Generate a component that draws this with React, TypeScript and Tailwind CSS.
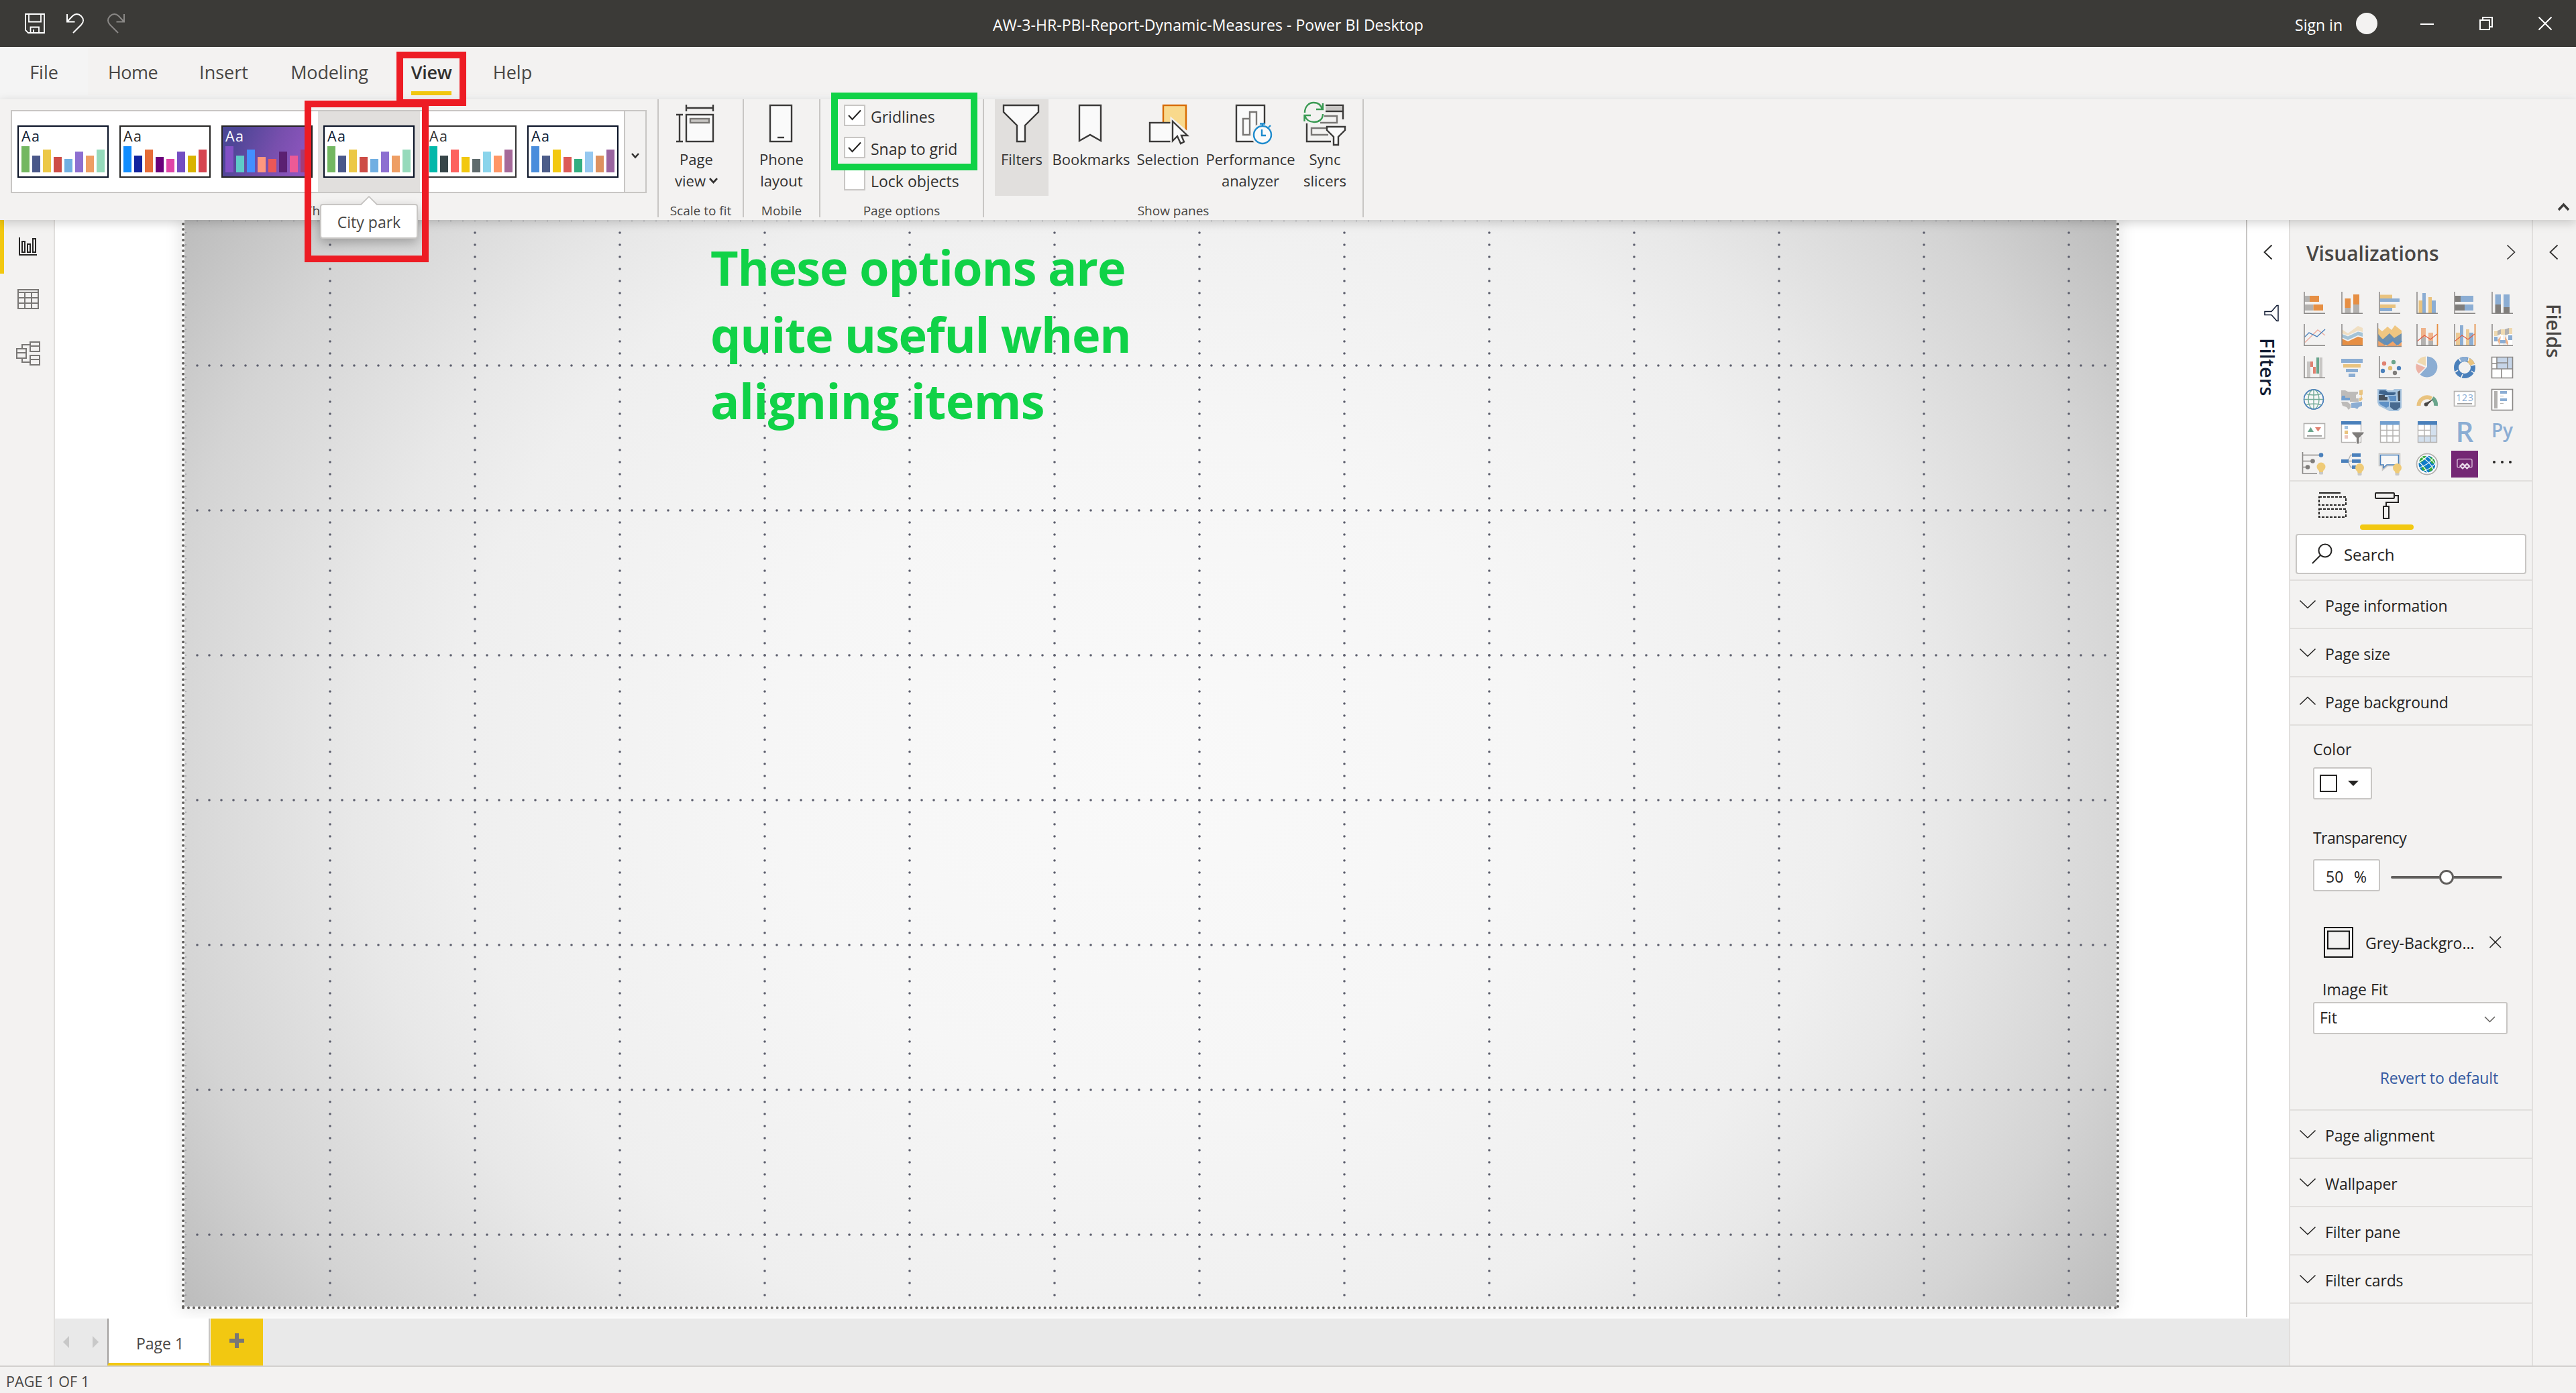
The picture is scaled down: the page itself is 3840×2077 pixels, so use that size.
import React from "react";

/* ---------- Theme gallery ---------- */

const BAR_TOPS = [31, 45, 36, 47, 50, 39, 45, 36];

type Theme = { ink: string; frame: string; bars: string[]; purple?: boolean };

const CITY_BARS = ["#73b761", "#4a588a", "#ecc846", "#cd4c46", "#71afe2", "#8d6fd1", "#ee9e64", "#95dabb"];

const THEMES: Theme[] = [
  { ink: "#0b1a33", frame: "#071024", bars: CITY_BARS },
  { ink: "#252423", frame: "#252423", bars: ["#118dff", "#12239e", "#e66c37", "#6b007b", "#e044a7", "#744ec2", "#d9b300", "#d64550"] },
  { ink: "#ffffff", frame: "#252423", purple: true, bars: ["#8250c4", "#5ecbc8", "#438fff", "#ff977e", "#eb5757", "#5b2071", "#ec5a96", "#a43b76"] },
  { ink: "#0b1a33", frame: "#071024", bars: CITY_BARS },
  { ink: "#333333", frame: "#333333", bars: ["#01b8aa", "#374649", "#fd625e", "#f2c80f", "#5f6b6d", "#8ad4eb", "#fe9666", "#a66999"] },
  { ink: "#0b1a33", frame: "#071024", bars: ["#4a8ddc", "#4c5d8a", "#f3c911", "#dc5b57", "#33ae81", "#95c8f0", "#dd915f", "#9a64a0"] },
];

function ThemeThumb({ theme, selected }: { theme: Theme; selected?: boolean }) {
  return (
    <div className={selected ? "flex h-full w-[152px] items-center justify-center bg-[#e1dfdd]" : "flex h-full w-[152px] items-center justify-center"}>
      <svg width="136" height="78" viewBox="0 0 136 78">
        <defs>
          <linearGradient id="purpleTheme" x1="0" y1="0" x2="1" y2="0.25">
            <stop offset="0" stopColor="#4a4896" />
            <stop offset="0.2" stopColor="#4f4697" />
            <stop offset="0.65" stopColor="#774fad" />
            <stop offset="1" stopColor="#8c55bd" />
          </linearGradient>
        </defs>
        <rect x="1" y="1" width="134" height="76" fill={theme.purple ? "url(#purpleTheme)" : "#ffffff"} stroke={theme.frame} strokeWidth="2" />
        <text x="6" y="24" fontFamily="Open Sans" fontSize="21.500" letterSpacing="1.300" fill={theme.ink}>Aa</text>
        {theme.bars.map((c, i) => (
          <rect key={i} x={6 + i * 16} y={BAR_TOPS[i]} width="12" height={70 - BAR_TOPS[i]} fill={c} />
        ))}
      </svg>
    </div>
  );
}

/* ---------- Ribbon ---------- */

function GroupLabel({ children }: { children: React.ReactNode }) {
  return <div className="flex h-[36px] items-center justify-center pt-[7px] text-[19px] leading-[24px] whitespace-nowrap text-[#484644]">{children}</div>;
}

function RibbonButton({ icon, lines, width, active }: { icon: React.ReactNode; lines: React.ReactNode[]; width: string; active?: boolean }) {
  return (
    <div className={`flex h-[144px] flex-col items-center ${active ? "bg-[#e1dfdd]" : ""} ${width}`}>
      <div className="flex h-[73px] shrink-0 justify-center">{icon}</div>
      {lines.map((l, i) => (
        <div key={i} className="flex h-[32px] items-center text-[22px] leading-[32px] whitespace-nowrap text-[#323130]">{l}</div>
      ))}
    </div>
  );
}

function Check({ label, checked }: { label: string; checked?: boolean }) {
  return (
    <div className="flex h-[48px] items-center gap-2 pl-[35px]">
      <div className="flex size-8 items-center justify-center border-2 border-[#c8c6c4] bg-white">
        {checked && (
          <svg width="24" height="24" viewBox="0 0 24 24" fill="none" stroke="#252423" strokeWidth="2">
            <path d="M3 12L8.5 18L21 4.5" />
          </svg>
        )}
      </div>
      <span className="pt-[3px] text-[23px] leading-8 whitespace-nowrap text-[#323130]">{label}</span>
    </div>
  );
}

const Sep = () => <div className="h-[176px] w-[2px] shrink-0 bg-[#c8c6c4]" />;

const PageViewIcon = () => (
  <svg className="mr-[2px]" width="60" height="72" viewBox="0 0 60 72" fill="none" stroke="#3b3a39" strokeWidth="2.4">
    <rect x="16" y="23" width="40" height="40" fill="#fafafa" />
    <path d="M16 8V18M56 8V18M16 13H56M1 23H11M1 63H11M6 23V63" />
    <rect x="22" y="29" width="28" height="6" fill="#c8c6c4" stroke="#797775" />
  </svg>
);
const PhoneIcon = () => (
  <svg className="mr-[2px]" width="36" height="72" viewBox="0 0 36 72" fill="none" stroke="#3b3a39" strokeWidth="2.4">
    <rect x="2" y="9" width="32" height="54" fill="#fafafa" />
    <path d="M13 57H23" />
  </svg>
);
const FunnelIcon = () => (
  <svg className="mr-[2px]" width="56" height="72" viewBox="0 0 56 72" fill="#fafafa" stroke="#3b3a39" strokeWidth="2.4">
    <path d="M2 9H54V19L34 39V63H22V39L2 19Z" />
  </svg>
);
const BookmarkIcon = () => (
  <svg className="mr-[3px]" width="36" height="72" viewBox="0 0 36 72" fill="#fafafa" stroke="#3b3a39" strokeWidth="2.4">
    <path d="M2 9H34V62L18 53L2 62Z" />
  </svg>
);
const SelectionIcon = () => (
  <svg className="ml-[2px]" width="62" height="72" viewBox="0 0 62 72" fill="none" strokeWidth="2.4">
    <rect x="23" y="9" width="34" height="38" fill="#f9d98c" stroke="#d86b00" />
    <rect x="3" y="35" width="34" height="28" fill="#fafafa" stroke="#3b3a39" />
    <path d="M37 33V63L45 56L50 67L56 64L51 54L61 53.5Z" fill="#fafafa" stroke="#f3f2f1" strokeWidth="7" />
    <path d="M37 33V62L44 55L49 66L54 63.5L50 54H59Z" fill="#fafafa" stroke="#3b3a39" />
  </svg>
);
const PerformanceIcon = () => (
  <svg className="ml-[9px]" width="56" height="72" viewBox="0 0 56 72" fill="none" strokeWidth="2.4">
    <rect x="2" y="9" width="42" height="54" fill="#fafafa" stroke="#3b3a39" />
    <path d="M12 29H22V53H12ZM22 53V19H32V53" stroke="#797775" />
    <circle cx="41" cy="53" r="17" fill="#f3f2f1" />
    <circle cx="41" cy="53" r="13" fill="#fafafa" stroke="#1e8bcd" />
    <path d="M41 40V36M37 36.5H45M40 45V54H46M50 42L53 39" stroke="#1e8bcd" />
  </svg>
);
const SyncIcon = () => (
  <svg width="66" height="72" viewBox="0 0 66 72" fill="none" strokeWidth="2.4">
    <path d="M34 9H60V30M6 36V63H42" stroke="#3b3a39" />
    <rect x="34" y="10" width="25" height="7" fill="#c8c6c4" />
    <path d="M34 18H60" stroke="#3b3a39" />
    <path d="M32 25H51V35H26M38 43H13V53H38" stroke="#797775" />
    <path d="M3 20C3 10 10 5 16 5C24 5 28 10 29 16M20 15H30V6M30 22C30 30 24 34 17 34C10 34 5 31 3 24M12 24H2.500V33" stroke="#3a9a53" />
    <path d="M36 41H63V46L53 56V68H46V56L36 46Z" fill="#fafafa" stroke="#3b3a39" />
  </svg>
);

/* ---------- Visualization icons, each on a 40 x 40 grid ---------- */

const AX = "#8a8886";
const B = "#8badd3";
const DB = "#4a80bb";
const Y = "#e9c37f";
const O = "#e68f44";
const G = "#b3b1af";
const DG = "#7f7d7b";
const R = (x: number, y: number, x2: number, y2: number, f: string, o = 1) => (
  <rect x={x} y={y} width={x2 - x} height={y2 - y} fill={f} opacity={o} />
);
const Axis = () => <path d="M5 3V35.300H36" fill="none" stroke={AX} strokeWidth="1.500" />;
const Bulb = ({ x, y }: { x: number; y: number }) => (
  <g>
    <path d={`M${x - 3} ${y + 6}h6v4q0 1.500 -1.500 1.500h-3q-1.500 0 -1.500 -1.500z`} fill="#c8c8c8" />
    <circle cx={x} cy={y} r="6.500" fill="#efcb77" />
    <path d={`M${x - 4} ${y + 4}h8l-1.500 4h-5z`} fill="#efcb77" />
  </g>
);

const VIZ: React.ReactNode[] = [
  <>{R(5.5, 9, 13, 18, G)}{R(13, 9, 27, 18, O)}{R(5.5, 22, 18.500, 31, G)}{R(18.500, 22, 33, 31, O)}<Axis /></>,
  <>{R(9.5, 13, 18, 27, O)}{R(9.5, 27, 18, 35, G)}{R(22, 7, 31, 22, O)}{R(22, 22, 31, 35, G)}<Axis /></>,
  <>{R(5.5, 7.500, 24, 13, Y)}{R(5.5, 13, 35, 18, B)}{R(5.5, 22, 29, 27, Y)}{R(5.5, 27, 24, 32, B)}<Axis /></>,
  <>{R(7.5, 16, 13, 35, Y)}{R(13, 5, 18, 35, B)}{R(22, 11, 27, 35, Y)}{R(27, 16, 33, 35, B)}<Axis /></>,
  <>{R(5.5, 9, 14, 18, DG)}{R(14, 9, 33, 18, B)}{R(5.5, 22, 20, 31, DG)}{R(20, 22, 33, 31, B)}<Axis /></>,
  <>{R(9.5, 7, 18, 22, B)}{R(9.5, 22, 18, 35, DG)}{R(22, 7, 31, 26, B)}{R(22, 26, 31, 35, DG)}<Axis /></>,
  <><path d="M6 30.500L25 12L36 20" fill="none" stroke="#ecada0" strokeWidth="1.400" /><path d="M5.500 22.500L12 16L24 22L36 11" fill="none" stroke={DB} strokeWidth="1.400" /><Axis /></>,
  <><path d="M5 11L14 17L29 6L36 9V15L29 13L14 20L5 17Z" fill="#f0dfc2" /><path d="M5 18L14 21.500L29 14.500L36 16V22L29 20L14 27L5 23Z" fill="#a4c3d6" /><path d="M5 25L14 29L29 22L36 24V35H5Z" fill={O} /><Axis /></>,
  <><path d="M3 9L9 14L17 7L23 12L28 5L38 13V35H3Z" fill="#efc681" /><path d="M3 18L10 26L20 17L27 24L38 17V34H3Z" fill="#7090ab" /><path d="M9 26L16 33L24 26L31 33L38 28" fill="none" stroke="#5f8fbe" strokeWidth="3" /><path d="M3 28L15 36H3ZM15 36L25 29L32 36ZM31 36L38 30V36Z" fill="#f1a468" /><path d="M2.500 2V36.500H38" fill="none" stroke={AX} strokeWidth="1.500" /></>,
  <>{R(11, 9, 18, 23, "#efb48c")}{R(11, 23, 18, 35, G)}{R(22, 16, 29, 28, "#efb48c")}{R(22, 28, 29, 35, G)}<path d="M5 29L16 20L25 26L35 18" fill="none" stroke="#df5c45" strokeWidth="1.200" /><Axis /><path d="M35.500 3V35" stroke={O} strokeWidth="1.800" /></>,
  <>{R(7, 16, 13, 35, "#ecca95")}{R(13, 5, 18, 35, B)}{R(22, 11, 27, 35, "#ecca95")}{R(27, 16, 33, 35, B)}<path d="M5 29L16 20L25 26L35 18" fill="none" stroke="#df5c45" strokeWidth="1.200" /><Axis /><path d="M35.500 3V35" stroke={O} strokeWidth="1.800" /></>,
  <>{R(7, 12, 13, 35, "#ffffff")}{R(16, 12, 21, 35, "#ffffff")}{R(28, 12, 35, 35, "#ffffff")}{R(8, 13, 13, 21, "#efd9b0")}<path d="M13 13L18 11V18L13 20ZM24 11L30 9V18L24 20Z" fill={G} />{R(18, 11, 24, 19, "#efd9b0")}{R(30, 9, 35, 18, "#efd9b0")}<path d="M13 27L18 21L16 35ZM24 21L29 30V35L24 30Z" fill="#efb48c" />{R(8, 22, 13, 29, B)}{R(29, 20, 35, 27, B)}{R(17, 27, 25, 32, B)}<Axis /></>,
  <>{R(9, 11, 14, 35, "#c8c6c4")}{R(14, 11, 18, 19, "#e08170")}{R(18, 19, 22, 29, "#e08170")}{R(23, 5, 27, 29, "#6aa58c")}{R(27.5, 5, 32, 35, "#c8c6c4")}<Axis /></>,
  <>{R(4, 7, 36, 13, B)}{R(7, 15, 33, 20, Y)}{R(11, 22, 29, 27, B)}{R(15, 29, 25, 34, B)}</>,
  <><Axis /><circle cx="12" cy="14" r="3.200" fill="#e08170" /><circle cx="26" cy="12" r="3.200" fill="#6aa58c" /><circle cx="21" cy="21" r="3.200" fill="#e3bd72" /><circle cx="10" cy="25" r="3.200" fill={DB} /><circle cx="34" cy="21" r="3.200" fill={DB} /><circle cx="28" cy="28" r="3.200" fill={DG} /></>,
  <><path d="M20 19V3.500A15.500 15.500 0 1 1 9.500 30.500Z" fill={B} /><path d="M17.500 20L4 14.500A15 15 0 0 0 7.500 29Z" fill="#ecb3a7" /><path d="M18 17.500V3.500A15 15 0 0 0 5 12Z" fill="#efd9b0" /></>,
  <g fill="none" strokeWidth="7"><circle cx="20" cy="20" r="12.500" stroke={DB} /><path d="M12.500 10A12.500 12.500 0 0 1 24 8.200" stroke={B} /><path d="M25.500 8.800A12.500 12.500 0 0 1 32 16.500" stroke={Y} /><path d="M14 11L10 4M25 10L27 3M30 17L37 15M30 25L35 29M17 30L14 37M10 24L4 28" stroke="#f3f2f1" strokeWidth="1.600" /></g>,
  <><rect x="4.500" y="4.500" width="31" height="31" fill="#fff" />{R(12, 5, 35, 22, "#c6d5e8")}<path d="M4.500 4.500H35.500V35.500H4.500ZM12 5V22M5 22H35M28 5V22M12 13H28M5 14H12M19 22V35" fill="none" stroke={AX} strokeWidth="1.600" /></>,
  <g fill="#f7f7f7" strokeWidth="1.400"><circle cx="19" cy="19.500" r="14.500" stroke={DB} /><g fill="none" stroke="#76ac99"><ellipse cx="19" cy="19.500" rx="8" ry="14.500" /><path d="M19 5V34M4.500 19.500H33.500M7 11Q19 15 31 11M7 28Q19 24 31 28" /></g><circle cx="19" cy="19.500" r="14.500" fill="none" stroke={DB} /></g>,
  <><path d="M4 6H10L14 8H29V11L26 13V18H22V21H12L10 17L4 19Z" fill="#bdbbb9" /><path d="M5 14H10V17H17V21H4Z" fill="#729fcf" /><path d="M31 6L36 5V12L34 14L36 19L33 22H31V17H33V13H31Z" fill="#e9c37f" /><path d="M17 18H30V23H17ZM4 23H13L18 27V32L15 35L12 31L6 29Z" fill="#bdbbb9" /><path d="M19 25L35 23V29L30 31L28 34L24 32H19Z" fill={B} /></>,
  <><path d="M2 4H15L17 6H25L27 4H38V32L33 37H20L14 34L4 29L2 24Z" fill="#a7c4df" /><path d="M5 6H14L18 9H29V12L26 13H12L4 11Z" fill="#3f648d" /><path d="M4 13H13V16H17V21H4Z" fill="#46505c" /><path d="M18 14H30V22H21ZM4 23H19V30L15 32L6 27Z" fill="#5e90c5" /><path d="M32 8L36 6V22H33Z" fill="#46505c" /><path d="M21 24H36V31L31 35H26L21 31Z" fill="#48698f" /></>,
  <g fill="none" strokeWidth="6"><path d="M7.500 29A12.500 12.500 0 0 1 26.500 18.200" stroke={Y} /><path d="M28 17.500A12.500 12.500 0 0 1 33 29" stroke="#6aa58c" /><path d="M17.500 25L29.500 19L20 28.500Z" fill="#484644" stroke="none" /><circle cx="18.500" cy="27" r="2.800" fill="#484644" stroke="none" /></g>,
  <><rect x="4.500" y="7.500" width="31" height="22" fill="#fff" stroke={G} strokeWidth="1.600" /><text x="20.500" y="21.500" textAnchor="middle" fontFamily="Open Sans" fontSize="14" letterSpacing="0.800" fill={B}>123</text><path d="M9 26H31" stroke={DG} strokeWidth="1.400" /></>,
  <><rect x="4.500" y="4.500" width="31" height="31" fill="#fff" stroke={AX} strokeWidth="1.600" />{R(8, 7, 13, 33, "#b3b1af")}{R(17, 7, 27, 11, B)}{R(17, 14, 22, 15, G)}{R(17, 18, 27, 22, B)}{R(17, 25, 22, 26, G)}</>,
  <><rect x="4.500" y="7.500" width="31" height="22" fill="#fff" stroke={G} strokeWidth="1.600" /><path d="M10 20H19L14.500 13Z" fill="#6aa58c" /><path d="M21 13H30L25.500 19.500Z" fill="#e08170" /><path d="M9 26H31" stroke={DG} strokeWidth="1.400" /></>,
  <><rect x="4.500" y="5" width="29" height="30.500" fill="#fff" stroke={G} strokeWidth="1.400" />{R(4, 4, 34, 9, DB)}{R(9, 11, 14, 16, "#a4c3e0")}{R(9, 18, 14, 23, Y)}{R(9, 25, 14, 30, "#ecc5bd")}<path d="M20 20H38V22L31 29V38H26.500V29L20 22Z" fill={DG} stroke="#f3f2f1" strokeWidth="1" /></>,
  <><rect x="6.500" y="5" width="28" height="30.500" fill="#fff" stroke={G} strokeWidth="1.500" /><path d="M16 9V35M25 9V35M7 17.500H34M7 26H34" stroke={G} strokeWidth="1.400" />{R(6, 4, 35, 9.500, "#729fcf")}</>,
  <><rect x="6.500" y="5" width="28" height="30.500" fill="#fff" />{R(25, 9, 34, 35, "#d3e0ee")}{R(7, 26, 34, 35, "#d3e0ee")}<path d="M6.500 9V35.500H34.500V9M16 9V35M25 9V35M7 17.500H25M7 26H34" fill="none" stroke={G} strokeWidth="1.400" />{R(6, 4, 35, 9.500, DB)}</>,
  <text x="20" y="35" textAnchor="middle" fontFamily="Open Sans" fontWeight="600" fontSize="42" fill={B}>R</text>,
  <text x="20" y="27.500" textAnchor="middle" fontFamily="Open Sans" fontWeight="600" fontSize="28" fill={B}>Py</text>,
  <><path d="M2.500 2V34H24M3 6.500H30M3 15.500H17M3 24.500H10" fill="none" stroke={AX} strokeWidth="1.600" /><circle cx="30" cy="6.500" r="3.300" fill={DB} /><circle cx="17.500" cy="15.500" r="3.300" fill={DG} /><circle cx="10" cy="24.500" r="3.300" fill={DG} /><Bulb x={30} y={24} /></>,
  <><path d="M14 15.500H20M14 15.500L18 6.500H20M14 15.500L18 24.500H20" fill="none" stroke={G} strokeWidth="1.300" />{R(4, 13, 15, 18, DB)}{R(20, 4, 33, 9, DB)}{R(20, 13, 33, 18, DB)}{R(20, 22, 28, 27, DB)}<Bulb x={31.5} y={25.500} /></>,
  <><path d="M4.500 4.500H35.500V22.500H17L9.500 29V22.500H4.500Z" fill="#f3f2f1" stroke="#c8c6c4" strokeWidth="1.600" /><path d="M6.500 6.500H33.500V21H16L11 25.500V21H6.500Z" fill="#f7f7f7" stroke={DB} strokeWidth="1.600" /><Bulb x={31.5} y={25.500} /></>,
  <><circle cx="20" cy="20" r="15.500" fill="#fff" stroke={G} strokeWidth="1.500" /><circle cx="20" cy="20" r="12.500" fill="#0f7bc8" /><path d="M9 13Q13 7 18 8L17 13L12 17L8 19ZM26 9L31 14L32 20L27 19L24 14ZM12 22L18 25L19 31L13 29ZM24 25L30 24L27 30L23 31Z" fill="#3aad3a" /><g fill="none" stroke="#fff" strokeWidth="1.200"><path d="M8 8Q24 14 31 31M15 5Q31 14 34 25M5 14Q15 22 22 35M6 26Q22 22 31 9M10 32Q26 28 35 16M5 18Q14 16 23 5" /></g><circle cx="20" cy="20" r="15.500" fill="none" stroke={G} strokeWidth="1.500" /></>,
  <><rect width="40" height="40" fill="#742774" /><g fill="none" stroke="#c9a5c9" strokeWidth="1.600"><path d="M13 25H10.500Q9 25 9 23V15Q9 12.500 11 12.500H29Q31 12.500 31 15V23Q31 25 29 25H27" /><path d="M17 19.500L20.500 23L17 26.500L13.500 23ZM23.500 19.500L27 23L23.500 26.500L20 23Z" stroke="#ecdcec" strokeWidth="2.200" /></g></>,
  <g fill="#252423"><circle cx="8" cy="17" r="2" /><circle cx="20" cy="17" r="2" /><circle cx="32" cy="17" r="2" /></g>,
];

/* ---------- Format pane ---------- */

function Section({ label, open }: { label: string; open?: boolean }) {
  return (
    <div className="flex h-[72px] items-center gap-[13px] border-b-2 border-[#e1dfdd] pl-[13px]">
      <svg width="26" height="14" viewBox="0 0 26 14" fill="none" stroke="#252423" strokeWidth="1.600">
        <path d={open ? "M1.500 12.500L13 1.500L24.500 12.500" : "M1.500 1.500L13 12.500L24.500 1.500"} />
      </svg>
      <span className="pt-[3px] text-[23px] leading-[30px] tracking-[-0.15px]">{label}</span>
    </div>
  );
}

function FormatPane() {
  return (
    <div className="flex w-[364px] shrink-0 flex-col border-x-2 border-[#e1dfdd] text-[#252423]">
      <div className="flex h-[100px] shrink-0 items-start justify-between pt-[28px] pr-[24px] pl-[24px]">
        <h2 className="pt-px text-[30px] leading-[42px] font-semibold tracking-[-0.1px] text-[#484644]">Visualizations</h2>
        <svg className="mt-[8px]" width="14" height="24" viewBox="0 0 14 24" fill="none" stroke="#323130" strokeWidth="1.600"><path d="M1.500 1.500L12.500 12L1.500 22.500" /></svg>
      </div>
      <div className="grid h-[290px] shrink-0 grid-cols-[repeat(6,56px)] content-start border-b-2 border-[#e1dfdd] pl-[8px]">
        {VIZ.map((icon, i) => (
          <div key={i} className="flex h-[48px] items-center justify-center">
            <svg className="overflow-visible" width="40" height="40" viewBox="0 0 40 40">{icon}</svg>
          </div>
        ))}
      </div>
      <div className="flex h-[78px] shrink-0 items-start pt-[14px]">
        <div className="flex h-[58px] w-[104px] justify-end pr-[20px]">
          <svg width="42" height="42" viewBox="0 0 42 42" fill="none" stroke="#252423" strokeWidth="2">
            <path d="M1 3H33" />
            <path d="M1 9H41V21H1ZM1 27H41V39H1Z" strokeDasharray="4 2" />
          </svg>
        </div>
        <div className="flex h-[58px] w-[80px] flex-col items-center justify-between">
          <svg width="40" height="44" viewBox="0 0 40 44" fill="none" stroke="#252423" strokeWidth="2">
            <rect x="3" y="3" width="28" height="8" rx="1" />
            <path d="M31 7H37V17H19V23" />
            <rect x="15" y="23" width="8" height="18" />
          </svg>
          <div className="h-[8px] w-[80px] rounded-[4px] bg-[#f2c811]" />
        </div>
      </div>
      <div className="h-[70px] shrink-0 border-b-2 border-[#e1dfdd] px-[8px]">
        <div className="flex h-[60px] w-[344px] items-center gap-[16px] rounded-[4px] border-2 border-[#c8c6c4] bg-white pl-[22px]">
          <svg width="32" height="32" viewBox="0 0 32 32" fill="none" stroke="#252423" strokeWidth="2">
            <circle cx="20" cy="11" r="9.500" />
            <path d="M13 18L1 30" />
          </svg>
          <span className="pt-[1px] text-[24px] leading-[32px] tracking-[-0.1px]">Search</span>
        </div>
      </div>
      <Section label="Page information" />
      <Section label="Page size" />
      <Section label="Page background" open />
      <div className="flex h-[574px] shrink-0 flex-col border-b-2 border-[#e1dfdd] pl-[34px] text-[23px] leading-[30px]">
        <div className="mt-[20px]">Color</div>
        <div className="mt-[12px] flex h-[48px] w-[88px] items-center gap-[16px] rounded-[3px] border-2 border-[#c8c6c4] bg-white pl-[8px]">
          <div className="size-[26px] border-2 border-[#252423] bg-white" />
          <svg width="16" height="8" viewBox="0 0 16 8" fill="#252423"><path d="M0 0H16L8 8Z" /></svg>
        </div>
        <div className="mt-[42px] tracking-[-0.55px]">Transparency</div>
        <div className="mt-[17px] flex h-[48px] items-center gap-[16px]">
          <div className="flex h-[48px] w-[100px] items-center rounded-[3px] border-2 border-[#c8c6c4] bg-white pt-[4px] pl-[17px]">
            <span className="w-[42px]">50</span>
            <span>%</span>
          </div>
          <div className="mt-[6px] flex h-[22px] w-[166px] items-center">
            <div className="h-[4px] w-[72px] rounded-l-[2px] bg-[#605e5c]" />
            <div className="size-[22px] shrink-0 rounded-full border-[3px] border-[#605e5c] bg-white" />
            <div className="h-[4px] w-[72px] rounded-r-[2px] bg-[#605e5c]" />
          </div>
        </div>
        <div className="mt-[53px] ml-[16px] flex h-[46px] items-center">
          <svg width="44" height="46" viewBox="0 0 44 46" fill="none" stroke="#111111" strokeWidth="2">
            <rect x="1" y="1" width="42" height="44" />
            <rect x="6" y="6.500" width="32" height="26" />
          </svg>
          <span className="mt-[2px] ml-[18px] w-[184px]">Grey-Backgro...</span>
          <svg width="20" height="20" viewBox="0 0 20 20" fill="none" stroke="#252423" strokeWidth="1.600"><path d="M1.500 1.500L18 18M18 1.500L1.500 18" /></svg>
        </div>
        <div className="mt-[32px] ml-[14px]">Image Fit</div>
        <div className="mt-[4px] flex h-[48px] w-[290px] items-center justify-between rounded-[3px] border-2 border-[#c8c6c4] bg-white pr-[16px] pl-[8px]">
          <span className="-mt-[2px]">Fit</span>
          <svg className="mt-[4px]" width="17" height="10" viewBox="0 0 17 10" fill="none" stroke="#605e5c" strokeWidth="1.500"><path d="M1 1L8.500 8.500L16 1" /></svg>
        </div>
        <div className="mt-[50px] w-[276px] text-right tracking-[-0.15px] text-[#3258a0]">Revert to default</div>
      </div>
      <Section label="Page alignment" />
      <Section label="Wallpaper" />
      <Section label="Filter pane" />
      <Section label="Filter cards" />
    </div>
  );
}

/* ---------- Report canvas ---------- */

const GRID_COLS = [217, 433, 649, 865, 1081, 1297, 1513, 1729, 1945, 2161, 2377, 2593, 2809];
const GRID_ROWS = [217, 433, 649, 865, 1081, 1297, 1513];

function Canvas() {
  return (
    <div className="flex h-[1638px] w-[3266px] shrink-0 overflow-hidden bg-white">
      <div className="-mt-[4px] ml-[189px] flex h-[1628px] w-[2888px] shrink-0 border-4 border-dotted border-[#605e5c] shadow-[0_0_24px_rgba(0,0,0,0.12)]">
        <div className="relative h-[1620px] w-[2880px] bg-[radial-gradient(ellipse_1728px_1500px_at_50%_50%,#f9f9f9_0%,#f6f6f6_33%,#efefef_60%,#e8e8e8_69%,#d4d4d4_86%,#cdcdcd_90%,#bbbbbb_100%)]">
          <svg className="absolute inset-0" width="2880" height="1620" fill="none" stroke="#5b5d6c" strokeWidth="3.600" strokeLinecap="round" strokeDasharray="0 18">
            {GRID_ROWS.map((y) => <path key={y} d={`M19 ${y}H2882`} />)}
            {GRID_COLS.map((x) => <path key={x} d={`M${x} 19V1620`} />)}
            {/* Dots on the outer edge are mostly hidden by the page border */}
            <path d="M2 19V1620M19 1.500H2880" strokeWidth="1.600" strokeOpacity="0.7" />
          </svg>
          <p className="absolute top-[21px] left-[784px] text-[72px] leading-[99.500px] font-bold tracking-[-1.1px] whitespace-nowrap text-[#10d247]">
            These options are<br />
            <span className="tracking-[-1.25px]">quite useful when</span><br />
            <span className="tracking-[-0.6px]">aligning items</span>
          </p>
        </div>
      </div>
    </div>
  );
}

export default function App() {
  return (
    <div className="relative flex h-[2077px] w-[3840px] flex-col overflow-hidden bg-[#f3f2f1] font-['Open_Sans','Noto_Sans',sans-serif]">
      {/* Title bar */}
      <header className="relative flex h-[70px] shrink-0 items-center justify-between bg-[#3b3a37] text-white">
        <div className="flex items-center gap-[31px] pl-[36px]">
          <svg width="31" height="32" viewBox="0 0 31 32" fill="none" stroke="#ffffff" strokeWidth="1.800"><path d="M2 2H30V30H6L2 26ZM7 2V13.500H25V2M9.500 30V21.500H22V30M14 25V30" /></svg>
          <svg width="29" height="32" viewBox="0 0 29 32" fill="none" stroke="#ffffff" strokeWidth="2"><path d="M2 2V13.500H13.500M2 13.500L10 5C14 1 19 1 23 5C27 9 27 14 23 18L11 30" /></svg>
          <svg width="29" height="32" viewBox="0 0 29 32" fill="none" stroke="#8a8886" strokeWidth="2"><path d="M27 2V13.500H15.500M27 13.500L19 5C15 1 10 1 6 5C2 9 2 14 6 18L18 30" /></svg>
        </div>
        <div className="absolute inset-x-0 flex justify-center pr-[238px] text-[23px] leading-[30px] tracking-[0.05px]">
          <span className="mt-[3px]">AW-3-HR-PBI-Report-Dynamic-Measures - Power BI Desktop</span>
        </div>
        <div className="flex items-center pr-[36px]">
          <span className="mt-[4px] text-[23px] leading-[30px]">Sign in</span>
          <div className="mr-[64px] ml-[20px] size-[32px] rounded-full bg-[#f3f2f1]" />
          <svg className="mr-[68px]" width="20" height="20" viewBox="0 0 20 20"><path d="M0 11H20" stroke="#fff" strokeWidth="2" /></svg>
          <svg className="mr-[68px]" width="20" height="20" viewBox="0 0 20 20" fill="none" stroke="#fff" strokeWidth="2"><path d="M1 5H15V19H1ZM5 5V1H19V15H15" /></svg>
          <svg width="20" height="20" viewBox="0 0 20 20" fill="none" stroke="#fff" strokeWidth="2"><path d="M0.500 0.500L19.500 19.500M19.500 0.500L0.500 19.500" /></svg>
        </div>
      </header>

      {/* Ribbon tabs */}
      <nav className="flex h-[78px] shrink-0 border-b-[6px] border-[#f4f4f4] text-[27px] leading-[36px] text-[#484644]">
        <div className="-mb-[6px] flex w-[131px] items-center justify-center bg-[#f4f4f4] pb-[3px]">File</div>
        <div className="flex w-[134px] items-center justify-center pt-[3px] tracking-[-0.6px]">Home</div>
        <div className="flex w-[137px] items-center justify-center pt-[3px]">Insert</div>
        <div className="flex w-[178px] items-center justify-center pt-[3px] tracking-[-0.2px]">Modeling</div>
        <div className="flex w-[126px] flex-col items-center pt-[20px] font-semibold text-[#323130]">
          <span className="h-[46px] tracking-[-0.3px]">View</span>
          <div className="h-[6px] w-[60px] bg-[#f2c811]" />
        </div>
        <div className="flex w-[116px] items-center justify-center pt-[3px]">Help</div>
      </nav>

      {/* Ribbon */}
      <section className="relative z-10 flex h-[180px] shrink-0 bg-[#f3f2f1] shadow-[0_4px_14px_rgba(0,0,0,0.18)]">
        <div className="w-[980px] shrink-0">
          <div className="mt-[16px] ml-[16px] flex h-[124px] w-[948px] border-2 border-[#c8c6c4] bg-white">
            {THEMES.map((t, i) => <ThemeThumb key={i} theme={t} selected={i === 3} />)}
            <div className="flex flex-1 items-center justify-center border-l-2 border-[#c8c6c4] bg-[#f3f2f1] pt-[12px]">
              <svg width="12" height="10" viewBox="0 0 12 10" fill="none" stroke="#323130" strokeWidth="2.600"><path d="M1 2L6 7.500L11 2" /></svg>
            </div>
          </div>
          <div className="mt-[4px]"><GroupLabel>Themes</GroupLabel></div>
        </div>
        <Sep />
        <div className="w-[125px] shrink-0">
          <RibbonButton
            width="w-[112px]"
            icon={<PageViewIcon />}
            lines={["Page", <span key="v" className="flex items-center gap-[5px]">view<svg width="13" height="11" viewBox="0 0 13 11" fill="none" stroke="#323130" strokeWidth="2.600"><path d="M1 2L6.500 8L12 2" /></svg></span>]}
          />
          <GroupLabel>Scale to fit</GroupLabel>
        </div>
        <Sep />
        <div className="w-[112px] shrink-0">
          <RibbonButton width="w-[112px]" icon={<PhoneIcon />} lines={["Phone", "layout"]} />
          <GroupLabel>Mobile</GroupLabel>
        </div>
        <Sep />
        <div className="w-[242px] shrink-0">
          <div className="h-[144px]">
            <Check label="Gridlines" checked />
            <Check label="Snap to grid" checked />
            <Check label="Lock objects" />
          </div>
          <GroupLabel>Page options</GroupLabel>
        </div>
        <Sep />
        <div className="w-[564px] shrink-0">
          <div className="flex pl-[16px]">
            <RibbonButton width="w-[80px]" active icon={<FunnelIcon />} lines={["Filters"]} />
            <RibbonButton width="w-[127px]" icon={<BookmarkIcon />} lines={["Bookmarks"]} />
            <RibbonButton width="w-[102px]" icon={<SelectionIcon />} lines={["Selection"]} />
            <RibbonButton width="w-[144px]" icon={<PerformanceIcon />} lines={["Performance", "analyzer"]} />
            <RibbonButton width="w-[78px]" icon={<SyncIcon />} lines={["Sync", "slicers"]} />
          </div>
          <GroupLabel>Show panes</GroupLabel>
        </div>
        <Sep />
        <div className="flex flex-1 items-end justify-end pr-[9px] pb-[13px]">
          <svg width="19" height="13" viewBox="0 0 19 13" fill="none" stroke="#3b3a39" strokeWidth="3.400"><path d="M2 11L9.500 3L17 11" /></svg>
        </div>

        {/* Theme name tooltip */}
        <div className="absolute top-[156px] left-[477px] flex h-[52px] w-[146px] items-center justify-center rounded-[4px] border-2 border-[#c8c6c4] bg-white pt-[2px] text-[23px] leading-[30px] text-[#484644] shadow-[0_6px_16px_rgba(0,0,0,0.25)]">
          City park
          <svg className="absolute -top-[14px] left-[57px]" width="28" height="15" viewBox="0 0 28 15"><path d="M2 13L14 1L26 13" fill="#fff" stroke="#c8c6c4" strokeWidth="1.800" /><path d="M3 13H25V15H3Z" fill="#fff" /></svg>
        </div>
      </section>

      {/* Workspace */}
      <main className="flex h-[1708px] shrink-0">
        <aside className="flex w-[82px] shrink-0 flex-col border-r-2 border-[#e1dfdd]">
          <div className="flex h-[80px] items-center border-l-[6px] border-[#f2c811] pl-[22px]">
            <svg width="28" height="28" viewBox="0 0 28 28" fill="none" stroke="#252423" strokeWidth="2"><path d="M1 0V26H27M5 6H9V22H5ZM13 10H17V22H13ZM21 2H25V22H21Z" /></svg>
          </div>
          <div className="flex h-[76px] items-center pl-[26px]">
            <svg width="32" height="30" viewBox="0 0 32 30" fill="none" stroke="#797775" strokeWidth="2"><path d="M1 1H31V29H1ZM1 5H31M1 13H31M1 21H31M11 5V29M21 5V29" /></svg>
          </div>
          <div className="flex h-[86px] items-center pl-[24px]">
            <svg width="36" height="36" viewBox="0 0 36 36" fill="none" stroke="#797775" strokeWidth="2"><path d="M1 11H15V25H1ZM1 17H15M21 1H35V15H21ZM21 7H35M21 21H35V35H21ZM21 27H35M9 11V5H21M9 25V31H21" /></svg>
          </div>
        </aside>

        <div className="flex w-[3330px] shrink-0 flex-col">
          <div className="flex h-[1638px]">
            <Canvas />
            <div className="flex flex-1 flex-col bg-white">
              <div className="relative flex h-[1636px] flex-col items-center border-l-2 border-[#c8c6c4] pt-[36px]">
                <svg width="14" height="24" viewBox="0 0 14 24" fill="none" stroke="#252423" strokeWidth="1.800"><path d="M12.500 1.500L1.500 12L12.500 22.500" /></svg>
                <svg className="mt-[66px] ml-[10px]" width="24" height="26" viewBox="0 0 24 26" fill="none" stroke="#111b33" strokeWidth="1.500"><path d="M22 1.500V24.500H20L12 15.500H2V10.500H12L20 1.500Z" /></svg>
                <span className="mt-[24px] mr-[2px] text-[29px] leading-[38px] font-semibold text-[#111b33] [writing-mode:vertical-rl]">Filters</span>
              </div>
            </div>
          </div>
          <div className="flex h-[70px] bg-[#e9e9e9]">
            <div className="flex w-[78px] items-center gap-[35px] pl-[12px]">
              <svg width="9" height="18" viewBox="0 0 9 18" fill="#c8c8c8"><path d="M9 0V18L0 9Z" /></svg>
              <svg width="9" height="18" viewBox="0 0 9 18" fill="#c8c8c8"><path d="M0 0V18L9 9Z" /></svg>
            </div>
            <div className="flex w-[153px] items-center justify-center border-r-2 border-b-4 border-l-2 border-r-[#c8c6c4] border-b-[#f2c811] border-l-[#a19f9d] bg-white pt-[8px] pl-[4px] text-[23px] leading-[30px] font-medium text-[#484644]">Page 1</div>
            <div className="ml-px flex w-[78px] items-center justify-center bg-[#f2c811]">
              <svg className="-mt-[4px]" width="22" height="22" viewBox="0 0 22 22"><path d="M11 0V22M0 11H22" stroke="#797775" strokeWidth="6" /></svg>
            </div>
          </div>
        </div>

        <FormatPane />

        <aside className="flex w-[64px] flex-col items-center pt-[36px]">
          <svg className="ml-[-2px]" width="14" height="24" viewBox="0 0 14 24" fill="none" stroke="#323130" strokeWidth="1.800"><path d="M12.500 1.500L1.500 12L12.500 22.500" /></svg>
          <span className="mt-[65px] mr-[3px] text-[29px] leading-[38px] font-semibold text-[#484644] [writing-mode:vertical-rl]">Fields</span>
        </aside>
      </main>

      {/* Status bar */}
      <footer className="flex h-[41px] shrink-0 items-center border-t-2 border-[#d2d0ce] pt-[4px] pl-[9px] text-[21.500px] leading-[30px] tracking-[0.1px] text-[#484644]">PAGE 1 OF 1</footer>

      {/* Annotation frames */}
      <div className="absolute top-[77px] left-[591px] z-20 h-[81px] w-[104px] border-[10px] border-[#ed1c24]" />
      <div className="absolute top-[150px] left-[454px] z-20 h-[241px] w-[185px] border-[10px] border-[#ed1c24]" />
      <div className="absolute top-[138px] left-[1239px] z-20 h-[116px] w-[218px] border-[10px] border-[#10d247]" />
    </div>
  );
}
